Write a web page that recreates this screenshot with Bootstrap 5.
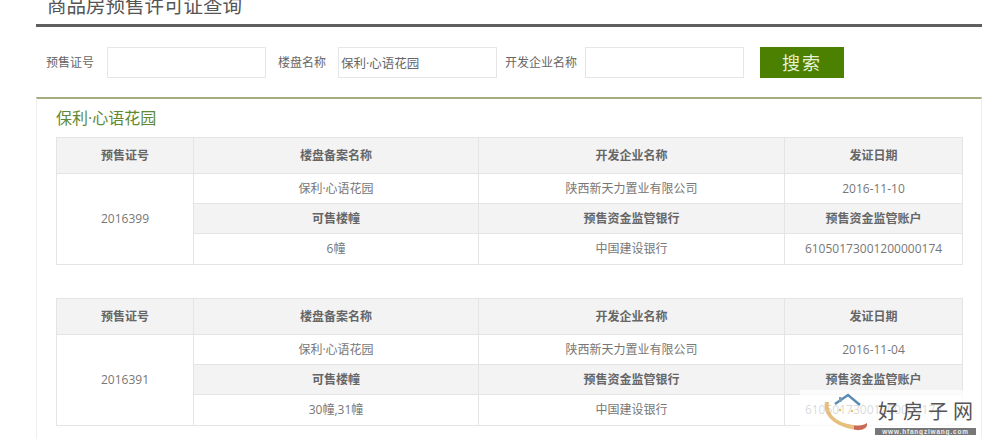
<!DOCTYPE html>
<html lang="zh">
<head>
<meta charset="utf-8">
<title>商品房预售许可证查询</title>
<link href="https://cdn.jsdelivr.net/npm/bootstrap@5.3.0/dist/css/bootstrap.min.css" rel="stylesheet">
<style>
html,body{height:439px;overflow:hidden}
body{font-family:"Open Sans","Noto Sans CJK SC",sans-serif;font-size:12px;color:#777;background:#fff;position:relative}
.page-wrap{width:946px;margin-left:36px}
.page-head{height:27px;padding-left:11px;border-bottom:3px solid #5f5f5f;font-size:19.5px;line-height:9px;color:#555;font-family:"Noto Sans CJK SC",sans-serif}
.search-row{height:70px;padding:20px 0 0 10px;align-items:flex-start}
.search-label{line-height:30px;color:#666;font-family:"Noto Sans CJK SC",sans-serif}
.search-input{width:159px;height:31px;border:1px solid #e6e6e6;padding:0 2px;font-size:12.5px;color:#666;border-radius:0;outline:0;font-family:"Open Sans","Noto Sans CJK SC",sans-serif}
.gap-a{margin-right:13px}
.gap-b{margin-right:12px}
.gap-c{margin-right:8px}
.search-btn{width:84px;height:31px;margin-left:16px;background:#4b8000;color:#e8f2d8;border:0;border-radius:0;font-size:18px;line-height:30px;padding:0;letter-spacing:2px}
.result-panel{border-top:2px solid #a3ad80;border-left:1px solid #eee;border-right:1px solid #eee;padding:8px 19px 0;height:342px}
.result-title{font-size:16px;line-height:22px;color:#5f8a33;margin-bottom:8px}
.permit-table{width:906px;table-layout:fixed;border-collapse:collapse;margin-bottom:33px;text-align:center}
.permit-table th,.permit-table td{border:1px solid #e4e4e4;padding:0;vertical-align:middle;font-weight:400}
.permit-table th{background:#f3f3f4;font-weight:700;color:#666}
.permit-table .row-head{height:36px}
.permit-table .row-a{height:30px}
.permit-table .row-b{height:31px}
.mark-box{position:absolute;left:800px;top:390px;width:181px;height:49px;background:rgba(255,255,255,.72)}
.mark-name{position:absolute;left:78px;top:9px;font-size:20px;line-height:24px;color:#555;letter-spacing:5px;white-space:nowrap;font-family:"Noto Sans CJK SC",sans-serif}
.mark-url{position:absolute;left:75px;top:38px;width:101px;height:7px;background:#777;color:#eee;font-size:6.5px;line-height:7px;text-align:center;font-weight:700;letter-spacing:.8px;white-space:nowrap;font-family:"Liberation Sans",sans-serif}
.mark-logo{position:absolute;left:0;top:0}
</style>
</head>
<body>
<div class="page-wrap">
  <div class="page-head">商品房预售许可证查询</div>
  <div class="search-row d-flex">
    <span class="search-label gap-a">预售证号</span>
    <input class="search-input gap-b" type="text">
    <span class="search-label gap-b">楼盘名称</span>
    <input class="search-input gap-c" type="text" value="保利·心语花园">
    <span class="search-label gap-c">开发企业名称</span>
    <input class="search-input" type="text">
    <button class="search-btn btn" type="button">搜索</button>
  </div>
  <div class="result-panel">
    <div class="result-title">保利·心语花园</div>
    <table class="permit-table">
      <colgroup><col style="width:137px"><col style="width:285px"><col style="width:306px"><col style="width:178px"></colgroup>
      <tr class="row-head"><th>预售证号</th><th>楼盘备案名称</th><th>开发企业名称</th><th>发证日期</th></tr>
      <tr class="row-a"><td rowspan="3">2016399</td><td>保利·心语花园</td><td>陕西新天力置业有限公司</td><td>2016-11-10</td></tr>
      <tr class="row-a"><th>可售楼幢</th><th>预售资金监管银行</th><th>预售资金监管账户</th></tr>
      <tr class="row-b"><td>6幢</td><td>中国建设银行</td><td>61050173001200000174</td></tr>
    </table>
    <table class="permit-table">
      <colgroup><col style="width:137px"><col style="width:285px"><col style="width:306px"><col style="width:178px"></colgroup>
      <tr class="row-head"><th>预售证号</th><th>楼盘备案名称</th><th>开发企业名称</th><th>发证日期</th></tr>
      <tr class="row-a"><td rowspan="3">2016391</td><td>保利·心语花园</td><td>陕西新天力置业有限公司</td><td>2016-11-04</td></tr>
      <tr class="row-a"><th>可售楼幢</th><th>预售资金监管银行</th><th>预售资金监管账户</th></tr>
      <tr class="row-b"><td>30幢,31幢</td><td>中国建设银行</td><td>61050173001200000174</td></tr>
    </table>
  </div>
</div>
<div class="mark-box">
  <svg class="mark-logo" width="78" height="49" viewBox="0 0 78 49">
    <path d="M25 12 C22 26 36 37 56 40 C63 41 68 38 67 33 C63 36 56 36 48 34 C36 31 27 24 29 12 Z" fill="#e3b468" opacity=".85"/>
    <path d="M54 39.500 C62 41 68 38 67 33 C64 35.500 60 36 54 35.500 Z" fill="#c9685a"/>
    <path d="M35 14 L48 5 L60 15" fill="none" stroke="#5b8cb5" stroke-width="2.500"/>
    <rect x="39" y="7" width="2.500" height="5" fill="#7d9ab5"/>
    <circle cx="40" cy="20" r="1.300" fill="#e6c65a"/><circle cx="52" cy="21" r="1.300" fill="#e6c65a"/>
  </svg>
  <div class="mark-name">好房子网</div>
  <div class="mark-url">www.hfangziwang.com</div>
</div>
<script src="https://cdn.jsdelivr.net/npm/bootstrap@5.3.0/dist/js/bootstrap.bundle.min.js"></script>
</body>
</html>
